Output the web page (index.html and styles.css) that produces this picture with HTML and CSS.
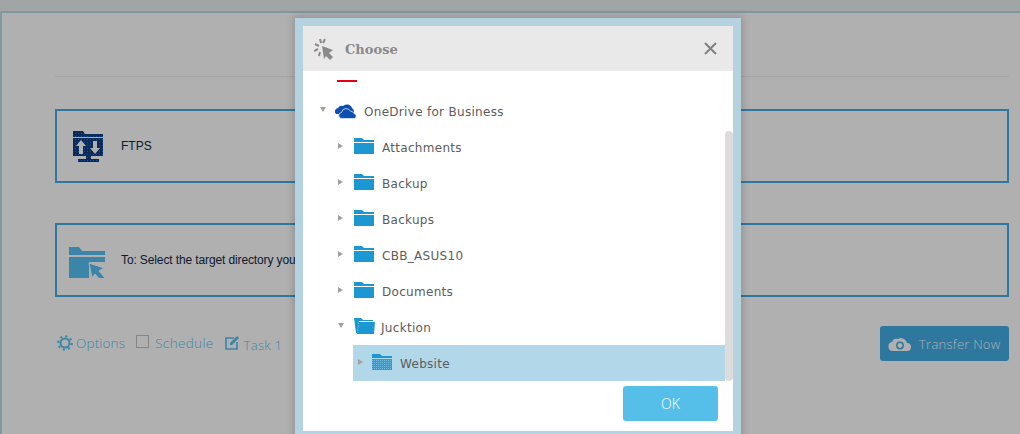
FILE: index.html
```html
<!DOCTYPE html>
<html lang="en">
<head>
<meta charset="utf-8">
<title>Choose</title>
<link rel="stylesheet" href="styles.css">
</head>
<body>
<div class="page">
  <div class="topband"></div>
  <main class="panel">
    <div class="rule"></div>
    <section class="box source">
      <svg class="box-icon" width="32" height="32" viewBox="0 0 32 32">
        <defs>
          <pattern id="dots-navy" width="3" height="3" patternUnits="userSpaceOnUse"><rect width="3" height="3" fill="#0b2a55"/><rect width="1" height="1" fill="#1450a8"/></pattern>
        </defs>
        <path fill="url(#dots-navy)" d="M1 1h10l2 3h18v3H1z"/>
        <path fill="url(#dots-navy)" d="M1 8h30v18H19v3h8v3H6v-3h8v-3H1z"/>
        <path fill="#b0b0b0" d="M9 10l5 6h-3v8H7v-8H4zM21 11h4v7h3l-5 6-5-6h3z"/>
      </svg>
      <span class="box-text">FTPS</span>
    </section>
    <section class="box target">
      <svg class="box-icon wide" width="38" height="32" viewBox="0 0 38 32">
        <path fill="#3a85a8" d="M1 1h10l3 4h23v4H1zM1 11h36v5H21v16H1z"/>
        <path fill="#3a85a8" stroke="#b0b0b0" stroke-width="1" d="M21 17l15 5-5 3 6 7-4 3-6-7-3 4z"/>
      </svg>
      <span class="box-text clipped">To: Select the target directory you</span>
    </section>
    <div class="actions">
      <div class="links">
        <a class="link">
          <svg width="16" height="16" viewBox="0 0 16 16"><circle cx="8" cy="8" r="4.500" fill="none" stroke="#3d86a8" stroke-width="2"/><circle cx="8" cy="8" r="6.800" fill="none" stroke="#3d86a8" stroke-width="2" stroke-dasharray="2.200 3.140"/></svg>
          Options
        </a>
        <a class="link schedule"><span class="checkbox"></span>Schedule</a>
        <a class="link task">
          <svg width="14" height="14" viewBox="0 0 14 14"><path fill="none" stroke="#3d86a8" stroke-width="1.600" d="M9 2H1v11h11V6"/><path fill="#3d86a8" d="M5 7l7-7 2 2-7 7H5z"/></svg>
          Task 1
        </a>
      </div>
      <button class="transfer">
        <svg width="23" height="16" viewBox="0 0 23 16"><path fill="#b0b0b0" d="M5 15a4.500 4.500 0 0 1-1-8.900A5 5 0 0 1 10 3a6 6 0 0 1 9 4 4 4 0 0 1 0 8z"/><circle cx="12" cy="9.500" r="3.200" fill="none" stroke="#2e78a0" stroke-width="1.500"/></svg>
        Transfer Now
      </button>
    </div>
  </main>

  <div class="modal">
    <header class="modal-head">
      <svg width="20" height="22" viewBox="0 0 20 22">
        <path fill="#8a8a8a" d="M8 8l11 4-4 3 4 4-3 3-4-4-2 3z"/>
        <path stroke="#8a8a8a" stroke-width="2" fill="none" d="M6 1l1 4M1 6l4 2M0 13l4-2M11 1L9 5M5 18l1-4"/>
      </svg>
      <span class="modal-title">Choose</span>
      <svg class="close" width="13" height="13" viewBox="0 0 13 13"><path stroke="#808080" stroke-width="2" d="M1 1l11 11M12 1L1 12"/></svg>
    </header>
    <div class="tree-wrap">
      <ul class="tree">
        <li class="row-stub"><span class="stub"></span></li>
        <li class="row root">
          <span class="caret down"></span>
          <svg class="cloud" width="23" height="16" viewBox="0 0 23 16"><path fill="#0d4fae" d="M2 11a3.500 3.500 0 0 1 2-6 4.500 4.500 0 0 1 5-2 5.500 5.500 0 0 1 9 2 4 4 0 0 1 1 6z"/><path fill="#0d4fae" stroke="#dfe9f6" stroke-width=".8" d="M8 15.500a3 3 0 0 1-.5-6 4.800 4.800 0 0 1 9-1.300 3.700 3.700 0 0 1 3.500 2.300 2.600 2.600 0 0 1 .5 5z"/></svg>
          <span class="label">OneDrive for Business</span>
        </li>
        <li class="row child"><span class="caret"></span><svg class="folder" width="20" height="16" viewBox="0 0 20 16"><path fill="#1b97d1" d="M0 0h8l2 2h10v2H0zM0 5h20v11H0z"/></svg><span class="label">Attachments</span></li>
        <li class="row child"><span class="caret"></span><svg class="folder" width="20" height="16" viewBox="0 0 20 16"><path fill="#1b97d1" d="M0 0h8l2 2h10v2H0zM0 5h20v11H0z"/></svg><span class="label">Backup</span></li>
        <li class="row child"><span class="caret"></span><svg class="folder" width="20" height="16" viewBox="0 0 20 16"><path fill="#1b97d1" d="M0 0h8l2 2h10v2H0zM0 5h20v11H0z"/></svg><span class="label">Backups</span></li>
        <li class="row child"><span class="caret"></span><svg class="folder" width="20" height="16" viewBox="0 0 20 16"><path fill="#1b97d1" d="M0 0h8l2 2h10v2H0zM0 5h20v11H0z"/></svg><span class="label">CBB_ASUS10</span></li>
        <li class="row child"><span class="caret"></span><svg class="folder" width="20" height="16" viewBox="0 0 20 16"><path fill="#1b97d1" d="M0 0h8l2 2h10v2H0zM0 5h20v11H0z"/></svg><span class="label">Documents</span></li>
        <li class="row child"><span class="caret down"></span><svg class="folder open" width="21" height="16" viewBox="0 0 21 16"><path fill="#1b97d1" d="M0 0h7l2 2h10v1H5L3 15H2zM5 4h16l-1 12H3z"/></svg><span class="label">Jucktion</span></li>
        <li class="row grandchild"><div class="selected"><span class="caret"></span><svg class="folder" width="20" height="16" viewBox="0 0 20 16"><defs><pattern id="dots-blue" width="2" height="2" patternUnits="userSpaceOnUse"><rect width="2" height="2" fill="#2a9fd6"/><rect width="1" height="1" fill="#6fbde2"/></pattern></defs><path fill="#1b97d1" d="M0 0h8l2 2h10v2H0z"/><path fill="url(#dots-blue)" d="M0 5h20v11H0z"/></svg><span class="label">Website</span></div></li>
      </ul>
      <div class="scrollbar"></div>
    </div>
    <footer class="modal-foot"><button class="ok">OK</button></footer>
  </div>
</div>
</body>
</html>
```
FILE: styles.css
```css
* { box-sizing: border-box; }
html, body { margin: 0; height: 100%; overflow: hidden; }
body { background: #b0b0b0; font-family: "Liberation Sans", Arial, sans-serif; }
ul { list-style: none; margin: 0; padding: 0; }
.page { position: relative; width: 1020px; height: 434px; overflow: hidden; }
.topband { height: 11px; background: #a1a5a6; }
.panel { height: 423px; border-top: 2px solid #7f97a1; border-left: 2px solid #7f97a1; border-top-left-radius: 2px; padding: 63px 11px 0 53px; }
.rule { height: 1px; background: #a5a5a5; }
.box { height: 74px; border: 2px solid #2e78a0; display: flex; align-items: center; }
.source { margin-top: 32px; padding-left: 15px; }
.target { margin-top: 40px; padding-left: 11px; }
.box-icon { margin-right: 17px; flex: none; margin-top: -1px; }
.box-icon.wide { margin-top: 4px; margin-right: 15px; }
.box-text { font-size: 12px; color: #0b1a30; white-space: nowrap; }
.source .box-text { margin-top: -1px; }
.target .box-text { margin-top: 0; letter-spacing: -.12px; width: 174px; overflow: hidden; }
.actions { display: flex; justify-content: space-between; align-items: center; margin-top: 29px; padding-left: 2px; }
.links { display: flex; align-items: center; font-family: "Open Sans", sans-serif; font-size: 13.500px; font-weight: 300; color: #3d86a8; margin-top: -2px; }
.link { display: flex; align-items: center; white-space: nowrap; letter-spacing: .15px; }
.link svg { margin-right: 3px; }
.schedule { margin-left: 11px; letter-spacing: .35px; }
.task { margin-left: 11px; font-size: 13px; margin-top: 4px; letter-spacing: .3px; }
.task svg { margin-right: 5px; margin-top: -3px; }
.checkbox { width: 13px; height: 13px; border: 1px solid #858585; margin-right: 6px; margin-top: -3px; }
.transfer { display: flex; align-items: center; gap: 8px; width: 129px; height: 35px; background: #2e78a0; color: #b0b0b0; border: 0; border-radius: 3px; padding: 0 0 0 8px; font-family: "Open Sans", sans-serif; font-size: 13px; font-weight: 300; letter-spacing: .25px; white-space: nowrap; }

.modal { position: absolute; left: 295px; top: 18px; width: 446px; height: 421px; border: 8px solid #b5d2e0; background: #fff; box-shadow: 0 0 7px 2px rgba(0,0,0,.16); }
.modal-head { height: 45px; background: #e9e9e9; display: flex; align-items: center; padding: 0 16px 0 11px; }
.modal-title { font-family: "DejaVu Serif", serif; font-weight: bold; font-size: 13px; color: #8a8a8a; margin-left: 11px; margin-top: 1px; flex: 1; }
.tree-wrap { position: relative; height: 310px; overflow: hidden; }
.tree { font-family: "DejaVu Sans", sans-serif; font-size: 12px; color: #5c5c5c; }
.label { letter-spacing: .3px; margin-top: 2px; }
.row-stub { height: 22px; padding: 9px 0 0 34px; }
.stub { display: block; width: 20px; height: 2px; background: #e0001b; }
.row { height: 36px; display: flex; align-items: center; white-space: nowrap; }
.root { padding-left: 17px; }
.child { padding-left: 35px; }
.grandchild { padding-left: 50px; padding-right: 8px; }
.selected { flex: 1; height: 36px; display: flex; align-items: center; background: #b1d7e9; padding-left: 5px; }
.caret { width: 0; height: 0; border-style: solid; border-width: 3.500px 0 3.500px 5px; border-color: transparent transparent transparent #a0a0a0; margin-right: 11px; margin-top: -3px; flex: none; }
.caret.down { border-width: 5px 3.500px 0 3.500px; border-color: #a0a0a0 transparent transparent transparent; margin-right: 8px; }
.cloud { margin-right: 7px; margin-top: 0; flex: none; }
.folder { margin-right: 8px; margin-top: -3px; flex: none; }
.folder.open { margin-left: 2px; margin-right: 6px; }
.selected .caret { margin-right: 9px; }
.selected .folder { margin-right: 8px; }
.scrollbar { position: absolute; right: 0; top: 60px; width: 8px; height: 250px; background: #dcdcdc; border-radius: 4px; }
.modal-foot { display: flex; justify-content: flex-end; padding: 5px 15px 0 0; }
.ok { width: 95px; height: 35px; background: #56bfe9; color: #fff; border: 0; border-radius: 3px; font-family: "Open Sans", sans-serif; font-size: 14px; font-weight: 300; }
```
